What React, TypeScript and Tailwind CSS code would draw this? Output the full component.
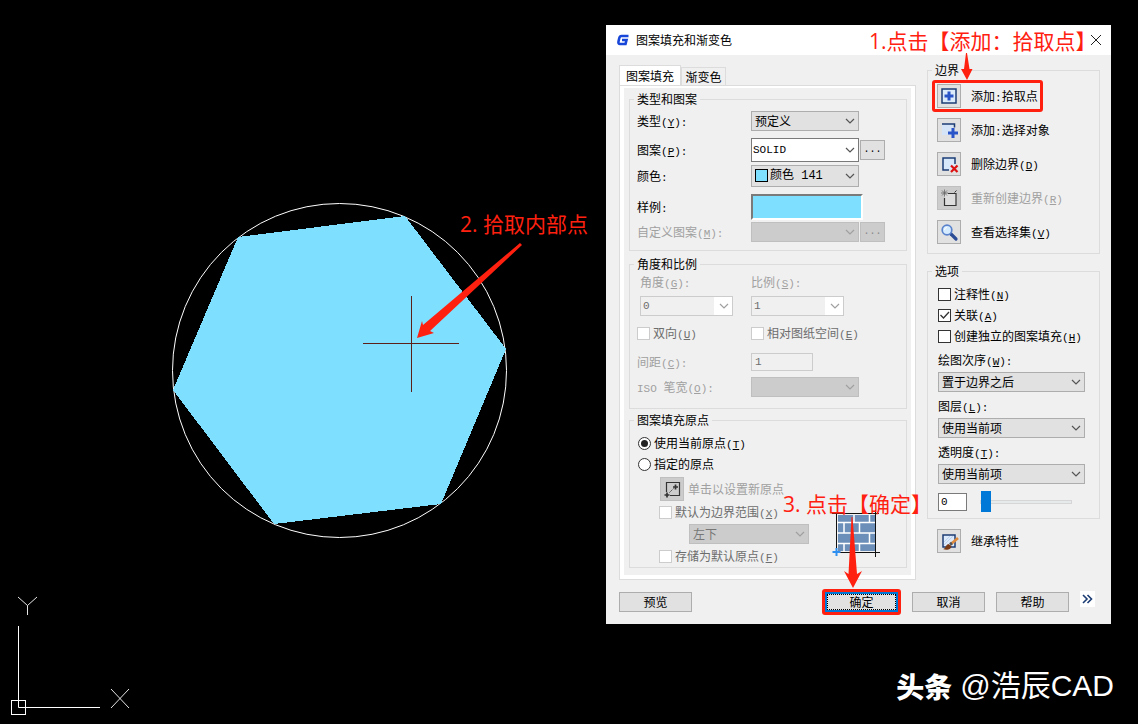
import React from 'react'

type HotProps = { k: string; colon?: boolean }

// shortcut letter after a caption, e.g. (Y):
function Hot({ k, colon }: HotProps) {
  return (
    <span className="font-['Liberation_Mono',monospace] text-[11px] leading-none">
      (<u>{k}</u>){colon ? ':' : ''}
    </span>
  )
}

function Mono({ children }: { children: React.ReactNode }) {
  return <span className="font-['Liberation_Mono',monospace] text-[11px] leading-none">{children}</span>
}

function Chevron({ className = '' }: { className?: string }) {
  return (
    <svg
      className={`pointer-events-none absolute right-1 top-1/2 -translate-y-1/2 ${className}`}
      width="10"
      height="6"
      viewBox="0 0 10 6"
      fill="none"
      stroke="currentColor"
      strokeWidth="1.2"
    >
      <path d="M1 1 L5 5 L9 1" />
    </svg>
  )
}

type SelectProps = {
  id: string
  value: string
  size: string
  look?: string
  disabled?: boolean
  label?: string
  children?: React.ReactNode
}

function Select({ id, value, size, look = 'bg-[#e1e1e1] border-[#adadad] pl-[3px]', disabled, label, children }: SelectProps) {
  return (
    <div className={`relative ${size}`}>
      <select
        id={id}
        aria-label={label}
        disabled={disabled}
        className={`block h-full w-full appearance-none border text-xs leading-4 opacity-100 ${look}`}
      >
        <option>{value}</option>
      </select>
      {children}
      <Chevron className={disabled ? 'text-[#a0a0a0]' : 'text-[#555555]'} />
    </div>
  )
}

const greyLook = 'bg-[#cccccc] border-[#bfbfbf] text-[#777777] pl-[3px]'

type CheckProps = { children: React.ReactNode; checked?: boolean; disabled?: boolean }

function Check({ children, checked, disabled }: CheckProps) {
  return (
    <label className={`relative flex h-4 items-center gap-[3px] ${disabled ? 'text-[#6d6d6d]' : ''}`}>
      <input
        type="checkbox"
        defaultChecked={checked}
        disabled={disabled}
        className="peer h-[13px] w-[13px] shrink-0 appearance-none border border-[#333333] bg-white disabled:border-[#cccccc]"
      />
      <svg
        className="pointer-events-none absolute left-[2px] top-1 hidden peer-checked:block"
        width="10"
        height="8"
        viewBox="0 0 10 8"
        fill="none"
        stroke="#333333"
        strokeWidth="1.3"
      >
        <path d="M0.5 4 L3.5 7 L9 1" />
      </svg>
      <span className="whitespace-nowrap">{children}</span>
    </label>
  )
}

function Radio({ children, checked }: CheckProps) {
  return (
    <label className="flex h-4 items-center gap-[3px]">
      <input
        type="radio"
        name="origin"
        defaultChecked={checked}
        className="grid h-[13px] w-[13px] appearance-none place-content-center rounded-full border border-[#333333] bg-white before:h-[7px] before:w-[7px] before:rounded-full before:content-[''] checked:before:bg-[#222222]"
      />
      <span>{children}</span>
    </label>
  )
}

function Group({ title, className = '', children }: { title: string; className?: string; children: React.ReactNode }) {
  return (
    <fieldset className={`border border-[#dcdcdc] ${className}`}>
      <legend className="ml-1 h-4 px-[3px]">{title}</legend>
      {children}
    </fieldset>
  )
}

function IconButton({ id, disabled, children }: { id: string; disabled?: boolean; children: React.ReactNode }) {
  return (
    <button
      id={id}
      disabled={disabled}
      className="flex h-6 w-6 shrink-0 items-center justify-center border border-[#adadad] bg-[#e1e1e1] disabled:border-[#bfbfbf] disabled:bg-[#cccccc]"
    >
      {children}
    </button>
  )
}

function AddPickIcon() {
  return (
    <svg width="16" height="16" viewBox="0 0 16 16">
      <rect x="1" y="1" width="14" height="14" fill="#dcebfa" stroke="#1c3d74" strokeWidth="1.5" />
      <path d="M6.500 3.500h3v3h3v3h-3v3h-3v-3h-3v-3h3z" fill="#2a55c8" />
    </svg>
  )
}

function AddSelectIcon() {
  return (
    <svg width="20" height="20" viewBox="0 0 20 20">
      <rect x="3" y="4" width="11" height="11" fill="#d6e4f7" />
      <path d="M3 4h12.500v3.500" fill="none" stroke="#1c3d74" strokeWidth="1.500" />
      <path d="M12.500 8h3v3.500H19v3h-3.500V18h-3v-3.500H9v-3h3.500z" fill="#2a55c8" />
    </svg>
  )
}

function RemoveIcon() {
  return (
    <svg width="20" height="20" viewBox="0 0 20 20">
      <rect x="3.500" y="3.500" width="12" height="12" fill="#d6e8fa" />
      <path d="M10 16H4V4h12v6" fill="none" stroke="#1c3d74" strokeWidth="1.500" />
      <path d="M12 11.500 L18.500 18 M18.500 11.500 L12 18" stroke="#dd1111" strokeWidth="2.200" />
    </svg>
  )
}

function RebuildIcon() {
  return (
    <svg width="20" height="20" viewBox="0 0 20 20" fill="none">
      <rect x="6" y="6" width="11" height="11" fill="#dddddd" />
      <path d="M9 5.500h8v12H5.500V10" stroke="#333333" strokeWidth="1.200" />
      <path d="M5.500 1.500v7 M2 5h7 M3 2.500l5 5 M8 2.500l-5 5" stroke="#666666" strokeWidth="0.800" />
      <path d="M15.500 4.500l2-2" stroke="#333333" />
    </svg>
  )
}

function LensIcon() {
  return (
    <svg width="20" height="20" viewBox="0 0 20 20">
      <path d="M12 12 L17 17" stroke="#2c4c96" strokeWidth="3.200" strokeLinecap="round" />
      <circle cx="8" cy="8" r="4.800" fill="#d5ebff" stroke="#5b83cc" strokeWidth="1.700" />
      <path d="M5.500 8a2.500 2.500 0 0 1 2.500-2.500" stroke="#ffffff" fill="none" />
    </svg>
  )
}

function BrushIcon() {
  return (
    <svg width="20" height="20" viewBox="0 0 20 20">
      <rect x="4" y="4" width="12" height="12" fill="#dceafb" stroke="#1c3d74" strokeWidth="1.500" />
      <path d="M5 11l6-6 M5 14l9-9" stroke="#b5cce8" strokeWidth="0.800" />
      <path d="M12 13 L19 7" stroke="#e08a3c" strokeWidth="2.600" />
      <path d="M11 13.500l2-1.500" stroke="#555555" strokeWidth="3" />
      <path d="M4 18c3 0 2-4 5.500-5l3 2c0 3-4.500 5-8.500 3z" fill="#7a3b16" />
    </svg>
  )
}

function OriginIcon() {
  return (
    <svg width="20" height="20" viewBox="0 0 20 20" fill="none" stroke="#333333">
      <path d="M4.500 13V3.500h13v13H8" strokeWidth="1.200" />
      <path d="M5 13.500v5 M2.500 16h5" strokeWidth="1.700" />
      <path d="M13.500 5.500v5 M11 8h5" strokeWidth="1.700" />
      <path d="M7.500 13.500l4-4" strokeDasharray="1.500 1" />
    </svg>
  )
}

function Bricks() {
  return (
    <svg className="mb-[7px] mr-[26px] ml-auto self-end" width="48" height="48" viewBox="0 0 48 48">
      <rect x="6" y="6" width="37" height="36" fill="#6b8fb8" />
      <g stroke="#ffffff" strokeWidth="1.500">
        <path d="M5 13.500h38 M5 24h38 M5 34.500h38" />
        <path d="M22 6v7.500 M37.500 6v7.500 M12 13.500V24 M27.500 13.500V24 M37.500 24v10.500 M12 34.500V43 M27.500 34.500V43" />
      </g>
      <path d="M0 4.500h47 M43.500 1v47 M4.500 4v38 M8 43.500h40" stroke="#111111" fill="none" />
      <path d="M4.500 39v8 M0.500 43h8" stroke="#2f8ff0" strokeWidth="2" />
    </svg>
  )
}

function Drawing() {
  return (
    <svg className="absolute left-0 top-0" width="606" height="600" viewBox="0 0 606 600">
      <circle cx="339.500" cy="370.500" r="167" fill="none" stroke="#ffffff" />
      <polygon
        points="405,216 506,349 441,504 274,524 173,390 238,237"
        fill="#7fdfff"
        shapeRendering="crispEdges"
      />
      <path d="M363 343.500h96 M411.500 296v96" stroke="#5c2018" />
      <polygon points="520,243 423,325 422,321 417,338 434,333 430,331 522,245" fill="#ff2010" />
    </svg>
  )
}

function AxisIcon() {
  return (
    <svg className="absolute bottom-0 left-0" width="140" height="134" viewBox="0 0 140 134" fill="none" stroke="#ffffff">
      <path d="M18.500 36v81.500H100" />
      <rect x="11.500" y="110.500" width="14" height="14" />
      <path d="M18 7l9.500 8.500L37 7 M27.500 15.500V25 M111 99l18 19 M129 99l-18 19" strokeWidth="0.900" />
    </svg>
  )
}

const pushBtn = 'h-5 w-[73px] border border-[#adadad] bg-[#e1e1e1]'
const note =
  "pointer-events-none absolute whitespace-nowrap font-['Open_Sans','Noto_Sans_CJK_SC',sans-serif] text-[21px] leading-6 text-[#ff2010]"

function PatternTab() {
  return (
    <div className="border border-[#dcdcdc] bg-white px-1 pb-1 pt-[2px]">
      <div className="bg-[#f0f0f0] pb-[7px] pl-[5px] pr-1 pt-[3px]">
        <Group title="类型和图案">
          <div className="grid grid-cols-[114px_auto] items-center pb-2 pl-[7px] pt-1">
            <label htmlFor="type">类型<Hot k="Y" colon /></label>
            <Select id="type" value="预定义" size="h-5 w-[108px]" />

            <label htmlFor="pattern" className="mt-[7px]">图案<Hot k="P" colon /></label>
            <div className="mt-[7px] flex items-center">
              <Select
                id="pattern"
                value="SOLID"
                size="h-6 w-[108px]"
                look="bg-white border-[#7a7a7a] pl-px font-['Liberation_Mono',monospace] !text-[11px]"
              />
              <button className="ml-px h-5 w-[25px] border border-[#adadad] bg-[#e1e1e1] font-['Liberation_Mono',monospace] text-[10px] leading-3">...</button>
            </div>

            <label htmlFor="color" className="mt-[3px]">颜色<Mono>:</Mono></label>
            <Select
              id="color"
              value="颜色 141"
              size="mt-[3px] h-[22px] w-[108px]"
              look="bg-[#e1e1e1] border-[#adadad] pl-[18px] font-['Liberation_Mono','Noto_Sans_CJK_SC',monospace]"
            >
              <span className="absolute left-1 top-1 h-[13px] w-[13px] border border-black bg-[#7fdfff]"></span>
            </Select>

            <span className="mt-[7px]">样例<Mono>:</Mono></span>
            <div className="mt-[7px] h-[26px] w-[112px] border-2 border-b-white border-l-[#7a7a7a] border-r-white border-t-[#7a7a7a] bg-[#7fdfff]"></div>

            <label htmlFor="custom" className="mt-[2px] text-[#a0a0a0]">自定义图案<Hot k="M" colon /></label>
            <div className="mt-[2px] flex items-center">
              <Select id="custom" value="" size="h-5 w-[108px]" look={greyLook} disabled />
              <button disabled className="ml-px h-5 w-[25px] border border-[#bfbfbf] bg-[#cccccc] font-['Liberation_Mono',monospace] text-[10px] leading-3 text-[#888888]">...</button>
            </div>
          </div>
        </Group>

        <Group title="角度和比例" className="mt-[5px]">
          <div className="grid grid-cols-[114px_auto] items-center pb-[11px] pl-[7px] pt-[2px] text-[#a0a0a0]">
            <label htmlFor="angle" className="h-4 pl-[3px]">角度<Hot k="G" colon /></label>
            <label htmlFor="scale" className="h-4">比例<Hot k="S" colon /></label>

            <Select
              id="angle"
              value="0"
              size="ml-[3px] mt-1.5 h-5 w-[93px]"
              look="border-[#cccccc] bg-linear-to-r from-[#f0f0f0] from-80% to-white to-80% pl-[2px] text-[#6d6d6d] font-['Liberation_Mono',monospace] !text-[11px]"
              disabled
            />
            <Select
              id="scale"
              value="1"
              size="mt-1.5 h-5 w-[93px]"
              look="border-[#cccccc] bg-linear-to-r from-[#f0f0f0] from-80% to-white to-80% pl-[2px] text-[#6d6d6d] font-['Liberation_Mono',monospace] !text-[11px]"
              disabled
            />

            <div className="mt-[9px]"><Check disabled>双向<Hot k="U" /></Check></div>
            <div className="mt-[9px]"><Check disabled>相对图纸空间<Hot k="E" /></Check></div>

            <label htmlFor="spacing" className="mt-3 h-4">间距<Hot k="C" colon /></label>
            <input
              id="spacing"
              disabled
              defaultValue="1"
              className="mt-3 h-[18px] w-[62px] border border-[#cccccc] bg-[#f0f0f0] px-[3px] font-['Liberation_Mono',monospace] text-[11px] text-[#6d6d6d]"
            />

            <label htmlFor="iso" className="mt-1.5 h-4">
              <Mono>ISO </Mono>笔宽<Hot k="O" colon />
            </label>
            <Select id="iso" value="" size="mt-1.5 h-5 w-[108px]" look={greyLook} disabled />
          </div>
        </Group>

        <Group title="图案填充原点" className="mt-[3px]">
          <div className="flex flex-col gap-[5px] pl-2 pt-[7px]">
            <Radio checked>使用当前原点<Hot k="T" /></Radio>
            <Radio>指定的原点</Radio>
          </div>
          <div className="flex pb-[3px] pt-[5px]">
            <div className="flex flex-col pl-[29px]">
              <div className="flex items-center gap-1 pl-px text-[#a0a0a0]">
                <IconButton id="new-origin" disabled><OriginIcon /></IconButton>
                <label htmlFor="new-origin">单击以设置新原点</label>
              </div>
              <div className="mt-[3px]"><Check disabled>默认为边界范围<Hot k="X" /></Check></div>
              <Select id="corner" label="边界范围" value="左下" size="ml-[30px] mt-1 h-5 w-[120px]" look={greyLook} disabled />
              <div className="mt-1"><Check disabled>存储为默认原点<Hot k="F" /></Check></div>
            </div>
            <Bricks />
          </div>
        </Group>
      </div>
    </div>
  )
}

function SideColumn() {
  return (
    <div className="w-[173px] shrink-0">
      <Group title="边界">
        <div className="flex flex-col gap-2.5 pb-[9px] pl-[9px] pt-1.5">
          <div className="relative flex items-center gap-2.5">
            <IconButton id="pick"><AddPickIcon /></IconButton>
            <label htmlFor="pick">添加<Mono>:</Mono>拾取点</label>
            <span className="pointer-events-none absolute -left-[5px] -top-1 h-8 w-[111px] rounded-[3px] border-[3px] border-[#ff2010]"></span>
          </div>
          <div className="flex items-center gap-2.5">
            <IconButton id="select"><AddSelectIcon /></IconButton>
            <label htmlFor="select">添加<Mono>:</Mono>选择对象</label>
          </div>
          <div className="flex items-center gap-2.5">
            <IconButton id="remove"><RemoveIcon /></IconButton>
            <label htmlFor="remove">删除边界<Hot k="D" /></label>
          </div>
          <div className="flex items-center gap-2.5 text-[#a0a0a0]">
            <IconButton id="rebuild" disabled><RebuildIcon /></IconButton>
            <label htmlFor="rebuild">重新创建边界<Hot k="R" /></label>
          </div>
          <div className="flex items-center gap-2.5">
            <IconButton id="view"><LensIcon /></IconButton>
            <label htmlFor="view">查看选择集<Hot k="V" /></label>
          </div>
        </div>
      </Group>

      <Group title="选项" className="mt-[9px]">
        <div className="flex flex-col pb-1.5 pl-2.5 pr-[14px] pt-[7px]">
          <div className="flex flex-col gap-[5px]">
            <Check>注释性<Hot k="N" /></Check>
            <Check checked>关联<Hot k="A" /></Check>
            <Check>创建独立的图案填充<Hot k="H" /></Check>
          </div>
          <label htmlFor="order" className="mt-2 h-4">绘图次序<Hot k="W" colon /></label>
          <Select id="order" value="置于边界之后" size="mt-1 h-5" />
          <label htmlFor="layer" className="mt-1.5 h-4">图层<Hot k="L" colon /></label>
          <Select id="layer" value="使用当前项" size="mt-1 h-5" />
          <label htmlFor="alpha" className="mt-1.5 h-4">透明度<Hot k="T" colon /></label>
          <Select id="alpha" value="使用当前项" size="mt-1 h-5" />
          <div className="mt-[7px] flex h-[21px] items-center">
            <input
              aria-label="透明度"
              defaultValue="0"
              className="h-[18px] w-[29px] border border-[#7a7a7a] bg-white px-[2px] font-['Liberation_Mono',monospace] text-[11px]"
            />
            <input
              type="range"
              aria-label="透明度"
              min="0"
              max="90"
              defaultValue="0"
              className="ml-[13px] h-[21px] w-[92px] appearance-none bg-transparent [&::-webkit-slider-runnable-track]:h-1 [&::-webkit-slider-runnable-track]:border [&::-webkit-slider-runnable-track]:border-[#d6d6d6] [&::-webkit-slider-runnable-track]:bg-[#e7eaea] [&::-webkit-slider-thumb]:-mt-[10px] [&::-webkit-slider-thumb]:h-[21px] [&::-webkit-slider-thumb]:w-2.5 [&::-webkit-slider-thumb]:appearance-none [&::-webkit-slider-thumb]:bg-[#0078d7]"
            />
          </div>
        </div>
      </Group>

      <div className="mt-2.5 flex items-center gap-2.5 pl-2.5">
        <IconButton id="inherit"><BrushIcon /></IconButton>
        <label htmlFor="inherit">继承特性</label>
      </div>
    </div>
  )
}

function HatchDialog() {
  return (
    <div className="relative w-[505px] bg-[#f0f0f0] font-['Noto_Sans_CJK_SC',sans-serif] text-xs leading-4 text-black">
      <div className="flex h-[30px] items-center bg-white pl-2.5 pr-[9px]">
        <svg width="13" height="12" viewBox="0 0 13 12" fill="none" stroke="#1746d8" strokeWidth="2.600">
          <path d="M12.500 2H5.500Q3.800 2 3.300 4L2.500 7.500Q2 10 4 10H9.500L10.500 6H6" />
        </svg>
        <h1 className="ml-[7px]">图案填充和渐变色</h1>
        <button aria-label="关闭" className="ml-auto">
          <svg width="12" height="12" viewBox="0 0 12 12" stroke="#222222">
            <path d="M1 1 L11 11 M11 1 L1 11" />
          </svg>
        </button>
      </div>

      <div className="pb-[9px] pl-[13px] pr-[11px] pt-[7px]">
        <div className="flex gap-[11px]">
          <div className="flex-1 pt-[3px]">
            <div className="flex h-5 items-end">
              <button className="h-5 w-[62px] border border-b-0 border-[#dcdcdc] bg-white">图案填充</button>
              <button className="h-[18px] w-[45px] border border-b-0 border-[#dcdcdc]">渐变色</button>
            </div>
            <PatternTab />
          </div>
          <SideColumn />
        </div>

        <div className="mt-[9px] flex items-center gap-[11px] pr-[5px]">
          <button className={pushBtn}>预览</button>
          <div className="ml-auto rounded-[3px] border-[3px] border-[#ff2010]">
            <button className="block h-5 w-[73px] border-2 border-[#0078d7] bg-[#e1e1e1]">
              <span className="block border border-dotted border-black leading-[14px]">确定</span>
            </button>
          </div>
          <button className={pushBtn}>取消</button>
          <button className={pushBtn}>帮助</button>
          <button aria-label="展开" className="mb-1.5 flex h-4 w-[15px] items-center justify-center bg-white">
            <svg width="11" height="10" viewBox="0 0 11 10" fill="none" stroke="#1c3d74" strokeWidth="1.600">
              <path d="M1 1l4 4-4 4 M5.500 1l4 4-4 4" />
            </svg>
          </button>
        </div>
      </div>

      {/* step notes drawn over the dialog */}
      <p className={`${note} left-[263px] top-1`}>1.点击【添加：拾取点】</p>
      <svg className="pointer-events-none absolute left-[354px] top-[28px]" width="14" height="28" viewBox="0 0 14 28">
        <polygon points="6,0 4,16 1,16 7,27 12.500,16 9.500,16 7,0" fill="#ff2010" />
      </svg>
      <p className={`${note} left-[177px] top-[467px]`}>3. 点击【确定】</p>
      <svg className="pointer-events-none absolute left-[237px] top-[492px]" width="20" height="72" viewBox="0 0 20 72">
        <polygon points="8.500,0 5.500,57 1,54 10,71 19,54 14,57 9.500,0" fill="#ff2010" />
      </svg>
    </div>
  )
}

function App() {
  return (
    <main className="relative flex min-h-screen items-start justify-end bg-black pr-[27px] pt-[25px]">
      <Drawing />
      <AxisIcon />
      <p className={`${note} left-[460px] top-[212px]`}>2. 拾取内部点</p>

      <HatchDialog />

      <p className="absolute bottom-5 right-6 flex h-9 items-center whitespace-nowrap font-['Noto_Sans_CJK_SC',sans-serif] text-[28px] leading-9 text-white">
        <b className="mr-2 font-black">头条</b>
        <span className="font-['Liberation_Sans','Noto_Sans_CJK_SC',sans-serif] text-[30px]">@浩辰CAD</span>
      </p>
    </main>
  )
}

export default App
